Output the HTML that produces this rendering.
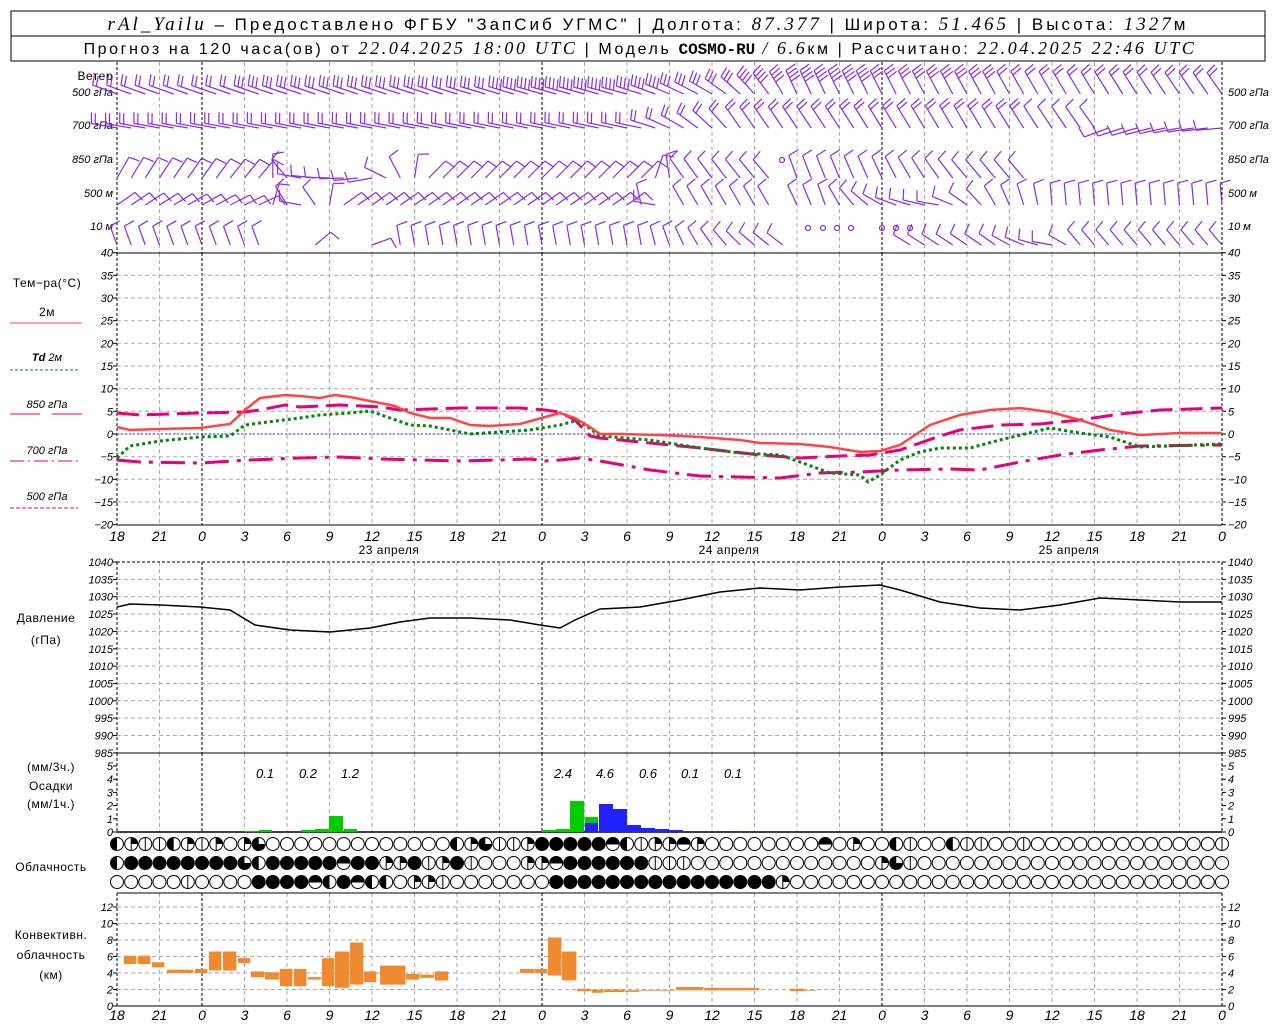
<!DOCTYPE html>
<html><head><meta charset="utf-8"><style>
html,body{margin:0;padding:0;background:#fff;width:1280px;height:1024px;overflow:hidden}
svg{display:block}
text{font-family:"Liberation Sans","DejaVu Sans",sans-serif;fill:#000}
.it{font-family:"Liberation Serif",serif;font-style:italic}
.ax{font-size:11px;font-family:"Liberation Sans",sans-serif;font-style:italic}
.lb{font-size:12px;letter-spacing:0.5px}
</style></head><body>
<svg id="s" width="1280" height="1024" xmlns="http://www.w3.org/2000/svg">
<rect x="11" y="11" width="1254" height="25" fill="none" stroke="#000"/>
<rect x="11" y="36" width="1254" height="25" fill="none" stroke="#000"/>
<text x="648" y="30" text-anchor="middle" font-size="17" letter-spacing="3"><tspan class="it" font-size="19">rAl_Yailu</tspan> – Предоставлено ФГБУ "ЗапСиб УГМС" | Долгота: <tspan class="it" font-size="19">87.377</tspan> | Широта: <tspan class="it" font-size="19">51.465</tspan> | Высота: <tspan class="it" font-size="19">1327</tspan>м</text>
<text x="640" y="54" text-anchor="middle" font-size="16" letter-spacing="2.6">Прогноз на 120 часа(ов) от <tspan class="it" font-size="18">22.04.2025 18:00 UTC</tspan>  | Модель <tspan font-family="Liberation Mono" font-weight="bold" letter-spacing="0">COSMO-RU</tspan> <tspan class="it" font-size="18">/ 6.6</tspan>км | Рассчитано: <tspan class="it" font-size="18">22.04.2025 22:46 UTC</tspan></text>
<g id="g"></g>
</svg>
<script>
(function(){
var g=document.getElementById('g'),out=[];
var X0=117,X1=1222,DX=(X1-X0)/78;
function X(h){return X0+h*DX;}
function L(x1,y1,x2,y2,st){out.push('<line x1="'+x1.toFixed(1)+'" y1="'+y1.toFixed(1)+'" x2="'+x2.toFixed(1)+'" y2="'+y2.toFixed(1)+'" '+st+'/>');}
function T(x,y,s,cls,anc){out.push('<text x="'+x+'" y="'+y+'" class="'+(cls||'')+'" text-anchor="'+(anc||'start')+'">'+s+'</text>');}
function P(pts,st){out.push('<polyline fill="none" points="'+pts.map(function(p){return p[0]+','+p[1]}).join(' ')+'" '+st+'/>');}
var GR='stroke="#aaa" stroke-width="1" stroke-dasharray="4,3"';
var DK='stroke="#000" stroke-width="1" stroke-dasharray="3,2"';
var hours=[18,21,0,3,6,9,12,15,18,21,0,3,6,9,12,15,18,21,0,3,6,9,12,15,18,21,0];
function vgrid(y1,y2){for(var i=0;i<=26;i++){var x=X(i*3),d=(i==0||i==26||hours[i]==0);L(x,y1,x,y2,d?DK:GR);}}
vgrid(62,253);
vgrid(253,525);vgrid(562,753);vgrid(753,832);vgrid(893,1006);
for(var t=-20;t<=40;t+=5){var y=434-t*4.533;if(t>-20&&t<40)L(X0,y,X1,y,GR);L(X0-4,y,X0,y,'stroke="#000"');L(X1,y,X1+4,y,'stroke="#000"');T(X0-4,y+4,String(t).replace('-','−'),'ax','end');T(X1+6,y+4,String(t).replace('-','−'),'ax');}
L(X0,253,X1,253,'stroke="#000"');L(X0,525,X1,525,'stroke="#000"');
for(var p=985;p<=1040;p+=5){var y=562+(1040-p)*3.47;if(p>985&&p<1040)L(X0,y,X1,y,GR);L(X0-4,y,X0,y,'stroke="#000"');L(X1,y,X1+4,y,'stroke="#000"');T(X0-4,y+4,p,'ax','end');T(X1+6,y+4,p,'ax');}
L(X0,562,X1,562,DK);L(X0,753,X1,753,'stroke="#000"');
for(var v=0;v<=5;v++){var y=832-v*13.2;L(X0-4,y,X0,y,'stroke="#000"');L(X1,y,X1+4,y,'stroke="#000"');T(X0-4,y+4,v,'ax','end');T(X1+6,y+4,v,'ax');}
L(X0,832,X1,832,'stroke="#000" stroke-width="1.5"');
for(var k=0;k<=12;k+=2){var y=1006-k*8.25;if(k>0)L(X0,y,X1,y,GR);L(X0-4,y,X0,y,'stroke="#000"');L(X1,y,X1+4,y,'stroke="#000"');T(X0-4,y+4,k,'ax','end');T(X1+6,y+4,k,'ax');}
L(X0,893,X1,893,'stroke="#000"');L(X0,1006,X1,1006,'stroke="#000"');
for(var i=0;i<=26;i++){var x=X(i*3);out.push('<text x="'+x+'" y="541" class="ax" style="font-size:14px" text-anchor="middle">'+hours[i]+'</text>');out.push('<text x="'+x+'" y="1020" class="ax" style="font-size:14px" text-anchor="middle">'+hours[i]+'</text>');}
out.push('<text x="389" y="554" class="lb" text-anchor="middle" letter-spacing="1.5">23 апреля</text><text x="729" y="554" class="lb" text-anchor="middle" letter-spacing="1.5">24 апреля</text><text x="1069" y="554" class="lb" text-anchor="middle" letter-spacing="1.5">25 апреля</text>');
var lab=[["Ветер",113,80,'end'],["Тем−ра(°С)",47,287,'middle'],["2м",47,316,'middle'],["Давление",46,622,'middle'],["(гПа)",46,644,'middle'],["(мм/3ч.)",51,771,'middle'],["Осадки",51,790,'middle'],["(мм/1ч.)",51,808,'middle'],["Облачность",51,871,'middle'],["Конвективн.",51,939,'middle'],["облачность",51,959,'middle'],["(км)",51,979,'middle']];
lab.forEach(function(a){out.push('<text x="'+a[1]+'" y="'+a[2]+'" class="lb" text-anchor="'+a[3]+'">'+a[0]+'</text>');});
var wl=[["500 гПа",96],["700 гПа",129],["850 гПа",163],["500 м",197],["10  м",230]];
wl.forEach(function(a){out.push('<text x="113" y="'+a[1]+'" class="ax" text-anchor="end">'+a[0]+'</text><text x="1228" y="'+a[1]+'" class="ax">'+a[0]+'</text>');});
out.push('<text x="47" y="361" class="ax" text-anchor="middle"><tspan font-weight="bold">Td</tspan>  2м</text>');
out.push('<text x="47" y="408" class="ax" text-anchor="middle">850 гПа</text><text x="47" y="454" class="ax" text-anchor="middle">700 гПа</text><text x="47" y="500" class="ax" text-anchor="middle">500 гПа</text>');
L(10,323,82,323,'stroke="#f44" stroke-width="1"');
L(10,370,78,370,'stroke="#080" stroke-dasharray="3,2"');
L(10,414,40,414,'stroke="#e07"');L(52,414,82,414,'stroke="#e07"');
L(10,461,78,461,'stroke="#e07" stroke-dasharray="14,4,2,4"');
L(10,508,78,508,'stroke="#e07" stroke-dasharray="4,2"');
L(X0,434,X1,434,'stroke="#33f" stroke-dasharray="2,2"');
P([[117,413],[140,415],[200,413],[245,412],[260,410],[285,405],[300,407],[340,405],[380,407],[400,410],[460,408],[520,408],[545,410],[560,412],[575,420],[590,436],[600,438],[640,442],[700,448],[760,455],[800,458],[840,456],[870,455],[900,450],[940,436],[960,430],[1000,425],[1040,424],[1080,420],[1120,414],[1160,410],[1222,408]],'stroke="#e6007a" stroke-width="3" stroke-dasharray="22,8"');
P([[117,460],[140,462],[200,463],[250,460],[300,458],[340,457],[380,459],[420,460],[460,461],[500,460],[530,459],[545,461],[560,460],[580,458],[600,461],[650,470],[700,476],[740,477],[780,478],[820,473],[860,472],[900,470],[950,469],[980,470],[1020,462],[1060,455],[1100,450],[1140,446],[1222,445]],'stroke="#e6007a" stroke-width="3" stroke-dasharray="24,8,4,8"');
P([[117,458],[130,446],[160,441],[200,437],[230,436],[245,425],[260,423],[300,418],[320,415],[350,413],[370,411],[390,418],[410,425],[430,426],[450,430],[470,434],[500,432],[530,430],[560,425],[575,421],[585,425],[600,436],[650,440],[700,448],[740,453],[780,455],[800,462],[830,473],[860,475],[868,482],[880,475],[900,460],[920,452],[940,448],[970,448],[1000,440],[1050,428],[1080,433],[1110,437],[1140,447],[1222,444]],'stroke="#080" stroke-width="3" stroke-dasharray="3,3"');
P([[117,427],[130,430],[160,429],[200,428],[230,424],[245,410],[260,398],[285,395],[300,396],[320,398],[335,395],[350,397],[370,401],[395,406],[410,413],[430,418],[450,418],[470,425],[490,426],[520,424],[545,417],[560,413],[575,418],[590,427],[600,434],[620,434],[660,435],[700,437],[740,440],[760,443],[800,444],[830,447],[860,452],[880,451],[900,445],[930,425],[960,415],[990,410],[1020,408],[1050,412],[1080,420],[1110,430],[1140,435],[1180,433],[1222,433]],'stroke="#f44" stroke-width="2.5"');
P([[117,607],[130,604],[160,605],[200,607],[230,610],[255,625],[290,630],[330,632],[370,628],[400,622],[430,618],[470,618],[510,620],[540,625],[560,628],[575,620],[600,609],[640,607],[680,600],[720,592],[760,588],[800,590],[840,587],[880,585],[900,590],[940,602],[980,608],[1020,610],[1060,605],[1100,598],[1140,600],[1180,602],[1222,602]],'stroke="#000" stroke-width="1.5"');
var pb=[[244,258,831,'#0c0'],[259,272,830,'#0c0'],[301,315,830,'#0c0'],[315,329,829,'#0c0'],[329,343,816,'#0c0'],[344,357,829,'#0c0'],[542,556,830,'#0c0'],[556,570,829,'#0c0'],[570,584,801,'#0c0'],[585,598,817,'#0c0'],[585,598,823,'#22f'],[599,613,804,'#22f'],[613,627,809,'#22f'],[627,641,825,'#22f'],[641,655,828,'#22f'],[655,669,829,'#22f'],[669,683,830,'#22f'],[727,741,831,'#22f']];
pb.forEach(function(b){out.push('<rect x="'+b[0]+'" y="'+b[2]+'" width="'+(b[1]-b[0])+'" height="'+(832-b[2])+'" fill="'+b[3]+'"/>');});
[["0.1",265],["0.2",308],["1.2",350],["2.4",563],["4.6",605],["0.6",648],["0.1",690],["0.1",733]].forEach(function(a){out.push('<text x="'+a[1]+'" y="778" class="ax" style="font-size:13px" text-anchor="middle">'+a[0]+'</text>');});
var cb=[[124,137,6.1,5.1],[138,151,6.1,5.1],[152,165,5.3,4.7],[167,194,4.4,4.0],[195,208,4.5,4.0],[209,222,6.6,4.3],[223,237,6.6,4.3],[238,251,5.8,5.2],[251,265,4.2,3.5],[265,280,4.1,3.2],[280,293,4.5,2.4],[294,307,4.5,2.4],[308,322,3.5,3.2],[322,335,5.8,2.4],[335,350,6.6,2.2],[350,364,7.7,2.6],[364,377,4.2,2.9],[380,406,4.9,2.6],[406,420,3.9,3.2],[420,435,3.8,3.4],[435,449,4.2,3.1],[520,535,4.5,4.0],[535,548,4.5,4.0],[548,562,8.3,3.7],[562,577,6.6,3.1],[577,592,2.1,1.8],[592,604,2.0,1.6],[604,625,2.0,1.7],[625,640,1.9,1.7],[640,676,1.9,1.8],[676,704,2.3,1.9],[704,760,2.2,1.9],[790,805,2.1,1.8],[805,817,1.9,1.8]];
cb.forEach(function(b){var y1=1006-b[2]*8.25,y2=1006-b[3]*8.25;out.push('<rect x="'+b[0]+'" y="'+y1.toFixed(1)+'" width="'+(b[1]-b[0]-0.6)+'" height="'+(y2-y1).toFixed(1)+'" fill="#f08a30"/>');});
function mk(n,def,sets){var a=[];for(var i=0;i<n;i++)a.push(def);sets.forEach(function(s){for(var i=s[0];i<=s[1];i++)a[i]=s[2];});return a;}
var r1=mk(79,0,[[0,0,4],[1,1,2],[2,3,1],[4,4,4],[5,5,2],[6,6,1],[7,7,2],[9,9,2],[10,10,6],[24,24,4],[25,25,2],[26,26,6],[27,28,1],[29,29,2],[30,34,8],[35,35,5],[36,36,4],[37,37,1],[38,38,2],[39,39,2],[40,40,5],[41,41,2],[50,50,5],[52,52,2],[55,55,4],[56,56,1],[59,59,4],[60,61,1],[64,64,1],[78,78,1]]);
var r2=mk(79,0,[[0,0,4],[1,8,8],[9,9,6],[10,10,4],[11,15,8],[16,16,5],[17,18,8],[19,20,2],[21,21,8],[22,22,1],[23,23,2],[24,24,8],[25,25,1],[29,30,2],[31,31,5],[32,37,8],[38,40,1],[54,54,2],[55,55,6],[56,56,1]]);
var r3=mk(79,0,[[5,5,1],[10,13,8],[14,14,5],[15,15,4],[16,16,8],[17,17,5],[18,19,4],[21,22,2],[23,23,1],[31,46,8],[47,47,2]]);
function cloud(cx,cy,c){var r=6.5;var s='<circle cx="'+cx.toFixed(1)+'" cy="'+cy+'" r="'+r+'" fill="'+(c==8?'#000':'#fff')+'" stroke="#000" stroke-width="1"/>';
 if(c==1)s+='<line x1="'+cx.toFixed(1)+'" y1="'+(cy-r)+'" x2="'+cx.toFixed(1)+'" y2="'+(cy+r)+'" stroke="#000"/>';
 if(c==2)s+='<path d="M'+cx.toFixed(1)+','+cy+' V'+(cy-r)+' A'+r+','+r+' 0 0 1 '+(cx+r).toFixed(1)+','+cy+' Z" fill="#000"/><line x1="'+cx.toFixed(1)+'" y1="'+(cy-r)+'" x2="'+cx.toFixed(1)+'" y2="'+(cy+r)+'" stroke="#000"/>';
 if(c==4)s+='<path d="M'+cx.toFixed(1)+','+(cy-r)+' A'+r+','+r+' 0 0 0 '+cx.toFixed(1)+','+(cy+r)+' Z" fill="#000"/>';
 if(c==5)s+='<path d="M'+(cx-r).toFixed(1)+','+cy+' A'+r+','+r+' 0 0 1 '+(cx+r).toFixed(1)+','+cy+' Z" fill="#000"/><line x1="'+(cx-r).toFixed(1)+'" y1="'+cy+'" x2="'+(cx+r).toFixed(1)+'" y2="'+cy+'" stroke="#000"/>';
 if(c==6)s+='<path d="M'+cx.toFixed(1)+','+cy+' V'+(cy-r)+' A'+r+','+r+' 0 1 0 '+(cx+r).toFixed(1)+','+cy+' Z" fill="#000"/>';
 return s;}
for(var i=0;i<79;i++){out.push(cloud(X(i),844,r1[i]));out.push(cloud(X(i),863,r2[i]));out.push(cloud(X(i),882,r3[i]));}
function interp(kf,h){for(var i=0;i<kf.length-1;i++){if(h>=kf[i][0]&&h<=kf[i+1][0]){var t=(h-kf[i][0])/(kf[i+1][0]-kf[i][0]||1);return [kf[i][1]+(kf[i+1][1]-kf[i][1])*t,Math.round(kf[i][2]+(kf[i+1][2]-kf[i][2])*t)];}}return [kf[kf.length-1][1],kf[kf.length-1][2]];}
var WS='stroke="#8a2be2" stroke-width="1.2"';
function barb(x,y,a,n,len){var r=a*Math.PI/180,dx=Math.cos(r),dy=-Math.sin(r);var ex=x+dx*len,ey=y+dy*len;L(x,y,ex,ey,WS);
 var pr=(a-80)*Math.PI/180,px=Math.cos(pr),py=-Math.sin(pr);
 for(var k=0;k<n;k++){var bx=ex-dx*k*4,by=ey-dy*k*4;L(bx,by,bx+px*11,by+py*11,WS);} }
var levels=[
 [94,[[0,160,2],[20,162,3],[36,165,4],[42,150,3],[48,115,4],[58,118,3],[66,120,2],[78,125,2]],26,[]],
 [128,[[0,170,2],[37,168,2],[40,150,2],[44,125,2],[60,120,2],[69,125,1],[70,200,1],[78,185,1]],26,[]],
 [178,[[0,60,1],[10,50,1],[13,170,1],[18,190,1],[22,45,1],[37,45,1],[40,125,1],[46,130,1],[48,110,1],[54,115,1],[60,130,1],[64,130,1],[66,150,1],[78,150,1]],24,[47,65,66,67,68,69,70,71,72,73,74,75,76,77,78]],
 [205,[[0,35,1],[10,25,1],[13,170,1],[16,35,1],[36,35,1],[38,170,1],[40,120,1],[46,120,1],[50,110,1],[55,160,1],[58,170,1],[62,120,1],[66,95,1],[78,95,1]],22,[39,47]],
 [245,[[0,110,1],[10,110,1],[14,40,1],[18,20,1],[20,100,1],[37,100,1],[39,110,1],[45,140,1],[53,150,1],[62,145,1],[66,170,1],[68,130,1],[78,130,1]],20,[11,12,13,15,16,17,19,48,49,50,51,52,53,54,55]]
];
levels.forEach(function(lv){for(var h=0;h<=78;h++){if(lv[3].indexOf(h)>=0)continue;var v=interp(lv[1],h);barb(X(h),lv[0],v[0],v[1],lv[2]);}});
[[808,228],[823,228],[837,228],[851,228],[882,228],[896,228],[910,228],[782,160]].forEach(function(c){out.push('<circle cx="'+c[0]+'" cy="'+c[1]+'" r="2.5" fill="none" '+WS+'/>');});
g.innerHTML=out.join('');
})();
</script>
</body></html>
